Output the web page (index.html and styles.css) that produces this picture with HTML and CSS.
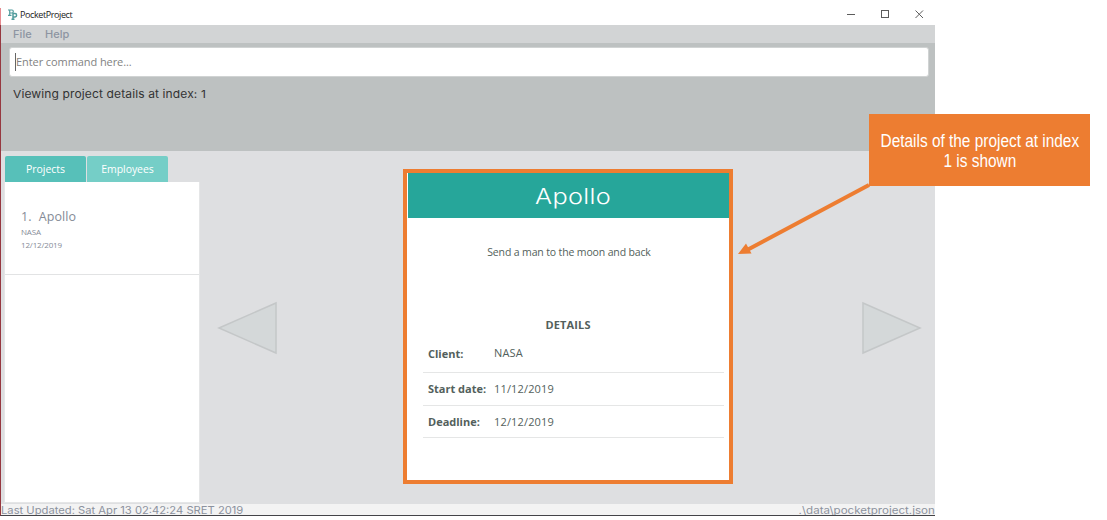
FILE: index.html
```
<!DOCTYPE html>
<html lang="en">
<head>
<meta charset="utf-8">
<title>PocketProject</title>
<link rel="stylesheet" href="styles.css">
</head>
<body>
<div class="window">
  <header class="titlebar">
    <svg class="logo" width="10" height="12" viewBox="0 0 10 12"><g fill="none" stroke="#519c9d" stroke-width="1.200"><path d="M1.700 6.500V1H4Q5.300 1 5.300 2.500T4 4H1.700M0 1H2M0 6.300H3.500"/><path d="M5 10.500V4.500H7Q8.600 4.500 8.600 6.200T7 8H5M3.500 10.300H6.500" stroke-width="1.500"/></g></svg>
    <span class="app-name">PocketProject</span>
    <svg class="controls" width="80" height="10" viewBox="0 0 80 10"><g fill="none" stroke="#5c5c5c"><path d="M0 5.500H8"/><rect x="34.500" y="1.500" width="7" height="7"/><path d="M68.500 1.500L76 9M76 1.500L68.500 9"/></g></svg>
  </header>
  <nav class="menu"><span>File</span><span>Help</span></nav>
  <section class="command">
    <div class="input"><i class="caret"></i><span>Enter command here...</span></div>
    <p class="result">Viewing project details at index: 1</p>
  </section>
  <main class="main">
    <aside class="side">
      <div class="tabs"><div class="tab active">Projects</div><div class="tab">Employees</div></div>
      <div class="list">
        <div class="item">
          <div class="item-title"><span>1.</span><span>Apollo</span></div>
          <div class="item-line">NASA</div>
          <div class="item-line">12/12/2019</div>
        </div>
      </div>
    </aside>
    <svg class="prev" width="62" height="54" viewBox="0 0 62 54"><path d="M2 27L59 2V52Z"/></svg>
    <article class="card">
      <h1><span>Apollo</span></h1>
      <p class="desc">Send a man to the moon and back</p>
      <h2>DETAILS</h2>
      <dl class="details">
        <div class="row client"><dt>Client:</dt><dd>NASA</dd></div>
        <div class="row"><dt>Start date:</dt><dd>11/12/2019</dd></div>
        <div class="row"><dt>Deadline:</dt><dd>12/12/2019</dd></div>
      </dl>
    </article>
    <svg class="next" width="62" height="54" viewBox="0 0 62 54"><path d="M2 2L59 27L2 52Z"/></svg>
  </main>
  <footer class="status"><span class="updated">Last Updated: Sat Apr 13 02:42:24 SRET 2019</span><span class="path">.\data\pocketproject.json</span></footer>
</div>
<svg class="arrow" width="134" height="74" viewBox="0 0 134 74"><path d="M131 3L10 67.500" stroke="#ed7d31" stroke-width="4"/><path d="M0 72L8 61.500L13.500 71.500Z" fill="#ed7d31"/></svg>
<div class="callout"><span>Details of the project at index<br>1 is shown</span></div>
</body>
</html>
```
FILE: styles.css
```
* { box-sizing: border-box; }
body { margin: 0; padding-top: 8px; height: 520px; overflow: hidden; background: #fff; font-family: "Open Sans", "Noto Sans", sans-serif; }
h1, h2, p, dl, dd { margin: 0; }
.window { width: 935px; height: 508px; display: flex; flex-direction: column; border-left: 1px solid #963840; border-bottom: 1px solid #444448; }
.titlebar { height: 17px; margin-left: -1px; border-left: 1px solid #e58b90; display: flex; align-items: flex-start; background: #fff; }
.logo { margin: 1px 2px 0 7px; }
.app-name { font-size: 9px; line-height: 14px; letter-spacing: -.4px; color: #222; }
.controls { margin: 1px 8px 0 auto; }
.menu { height: 18px; padding-left: 12px; display: flex; gap: 13px; background: #d2d4d5; color: #8d94a2; font: 500 11px/18px Inter, sans-serif; letter-spacing: .1px; }
.command { height: 108px; padding: 4px 6px 0 8px; background: #bdc1c1; }
.input { height: 30px; background: #fff; border: 1px solid #d0d3d3; border-radius: 3px; display: flex; align-items: center; padding-left: 5px; color: #828282; font-size: 11px; letter-spacing: -.08px; }
.input span { margin-top: -2px; }
.caret { width: 1px; height: 18px; background: #666; }
.result { width: max-content; margin: 8px 0 0 4px; color: #333; font: 11px/18px Inter, sans-serif; letter-spacing: .1px; transform: scaleX(1.095); transform-origin: left; }
.main { height: 353px; display: flex; align-items: flex-start; background: #dedfe1; }
.side { width: 196px; margin: 4px 0 0 3px; flex: none; }
.tabs { display: flex; align-items: flex-end; gap: 1px; height: 27px; padding-left: 1px; }
.tab { width: 81px; height: 26px; border-radius: 2px 2px 0 0; background: #75cec7; color: #fff; font-size: 10.500px; line-height: 27px; text-align: center; letter-spacing: -.06px; }
.tab.active { background: #57c0b9; }
.list { height: 321px; background: #fff; border: solid #e5e6e7; border-width: 0 1px 1px; }
.item { height: 93px; padding: 26px 0 0 16px; border-bottom: 1px solid #e2e3e4; color: #858b97; }
.item-title { display: flex; gap: 7px; font-size: 12.500px; line-height: 17px; letter-spacing: .1px; }
.item-line { font-size: 8px; line-height: 13px; letter-spacing: -.15px; }
.item-title + .item-line { margin-top: 1px; line-height: 12px; }
.prev { margin: 150px 0 0 17px; flex: none; }
.next { margin: 150px 0 0 128px; flex: none; }
.prev path, .next path { fill: #d4d8d9; stroke: #c4c7c8; stroke-width: 1.500px; }
.card { width: 330px; height: 315px; margin: 18px 0 0 124px; flex: none; border: 4px solid #ed7d31; background: #fff; color: #535f5c; }
.card h1 { height: 45px; margin-left: 1px; background: #26a69a; color: #fff; text-align: center; font: 300 22px/47px Inter, sans-serif; padding-left: 9px; }
.card h1 span { display: inline-block; transform: scaleX(1.150); letter-spacing: .3px; }
.desc { margin-top: 26px; padding-left: 2px; text-align: center; font-size: 10.500px; line-height: 16px; letter-spacing: -.14px; }
.card h2 { margin-top: 57px; text-align: center; font-size: 11px; line-height: 16px; letter-spacing: .15px; }
.details { margin: 8px 5px 0 16px; font-size: 11px; }
.row { display: flex; align-items: center; height: 32.500px; padding-left: 5px; border-bottom: 1px solid #e5e6e6; }
.client { height: 32px; padding-bottom: 6px; }
.client + .row { height: 33px; padding-bottom: 1px; }
.client dd { position: relative; top: -1px; }
.row:last-child { height: 32px; }
.row dt { width: 66px; font-weight: 700; white-space: nowrap; }
.row dd { letter-spacing: .15px; }
.status { height: 11px; display: flex; justify-content: space-between; overflow: hidden; background: #f3f3f3; color: #8c929e; font: 10.500px/14px Inter, sans-serif; }
.updated { transform: scaleX(1.067); transform-origin: left; }
.path { transform: scaleX(1.100); transform-origin: right; }
.callout { position: absolute; left: 869px; top: 114px; width: 221px; height: 72px; display: flex; align-items: center; justify-content: center; background: #ed7d31; color: #fff; text-align: center; font: 17.500px/20px "Liberation Sans Narrow", "Liberation Sans", sans-serif; white-space: nowrap; }
.callout span { transform: translateY(1px) scaleX(.880); }
.arrow { position: absolute; left: 738px; top: 182px; }
```
